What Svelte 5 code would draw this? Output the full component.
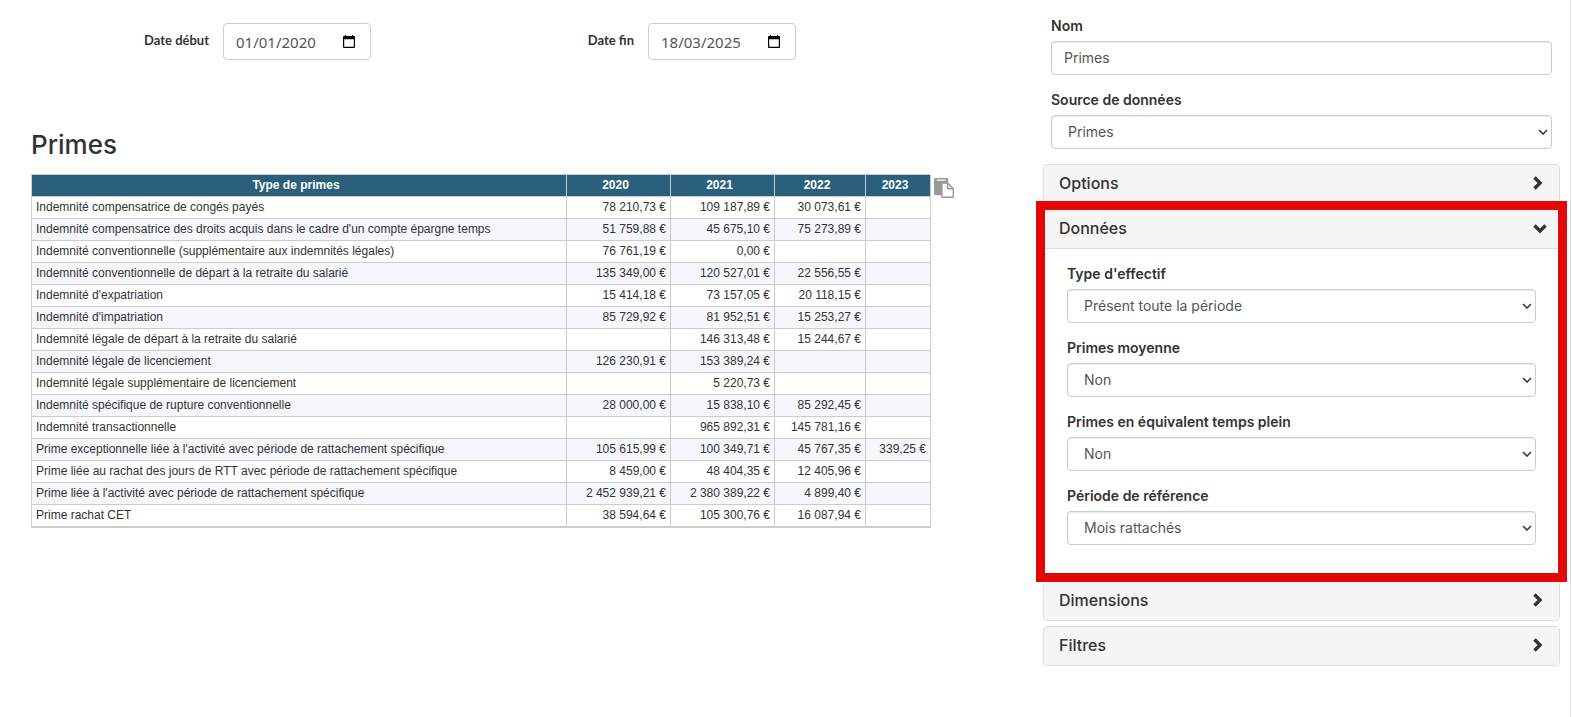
<script>
	let startDate = $state('01/01/2020');
	let endDate = $state('18/03/2025');
	let name = $state('Primes');
	let source = $state('Primes');
	let opened = $state('Données');

	const years = ['2020', '2021', '2022', '2023'];

	const rows = [
		['Indemnité compensatrice de congés payés', '78 210,73 €', '109 187,89 €', '30 073,61 €', ''],
		["Indemnité compensatrice des droits acquis dans le cadre d'un compte épargne temps", '51 759,88 €', '45 675,10 €', '75 273,89 €', ''],
		['Indemnité conventionnelle (supplémentaire aux indemnités légales)', '76 761,19 €', '0,00 €', '', ''],
		['Indemnité conventionnelle de départ à la retraite du salarié', '135 349,00 €', '120 527,01 €', '22 556,55 €', ''],
		["Indemnité d'expatriation", '15 414,18 €', '73 157,05 €', '20 118,15 €', ''],
		["Indemnité d'impatriation", '85 729,92 €', '81 952,51 €', '15 253,27 €', ''],
		['Indemnité légale de départ à la retraite du salarié', '', '146 313,48 €', '15 244,67 €', ''],
		['Indemnité légale de licenciement', '126 230,91 €', '153 389,24 €', '', ''],
		['Indemnité légale supplémentaire de licenciement', '', '5 220,73 €', '', ''],
		['Indemnité spécifique de rupture conventionnelle', '28 000,00 €', '15 838,10 €', '85 292,45 €', ''],
		['Indemnité transactionnelle', '', '965 892,31 €', '145 781,16 €', ''],
		["Prime exceptionnelle liée à l'activité avec période de rattachement spécifique", '105 615,99 €', '100 349,71 €', '45 767,35 €', '339,25 €'],
		['Prime liée au rachat des jours de RTT avec période de rattachement spécifique', '8 459,00 €', '48 404,35 €', '12 405,96 €', ''],
		["Prime liée à l'activité avec période de rattachement spécifique", '2 452 939,21 €', '2 380 389,22 €', '4 899,40 €', ''],
		['Prime rachat CET', '38 594,64 €', '105 300,76 €', '16 087,94 €', '']
	];

	const fields = [
		{ id: 'effectif', label: "Type d'effectif", value: 'Présent toute la période' },
		{ id: 'moyenne', label: 'Primes moyenne', value: 'Non' },
		{ id: 'etp', label: 'Primes en équivalent temps plein', value: 'Non' },
		{ id: 'periode', label: 'Période de référence', value: 'Mois rattachés' }
	];

	const panels = ['Options', 'Données', 'Dimensions', 'Filtres'];

	const toggle = (panel) => {
		opened = opened === panel ? '' : panel;
	};
</script>

{#snippet calendar()}
	<svg viewBox="0 0 14 14" width="14" height="14" aria-hidden="true">
		<path d="M2 1h1V0h1v1h6V0h1v1h1q1 0 1 1v10q0 1-1 1H2q-1 0-1-1V2q0-1 1-1zM2.200 4.200v7.600h9.600v-7.600z" fill="#000" fill-rule="evenodd" />
	</svg>
{/snippet}

{#snippet select(id, label, value)}
	<div class="form-group">
		<label for={id}>{label}</label>
		<div class="select-wrap">
			<select {id} class="form-control">
				<option>{value}</option>
			</select>
			<svg viewBox="0 0 10 6" width="10" height="6" aria-hidden="true">
				<path d="M1 1l4 4 4-4" fill="none" stroke="#444" stroke-width="1.700" />
			</svg>
		</div>
	</div>
{/snippet}

<div class="page">
	<main>
		<div class="dates">
			<div class="date-group">
				<label for="start">Date début</label>
				<div class="date-control">
					<input id="start" type="text" bind:value={startDate} />
					<button aria-label="Choisir la date de début">{@render calendar()}</button>
				</div>
			</div>
			<div class="date-group">
				<label for="end">Date fin</label>
				<div class="date-control">
					<input id="end" type="text" bind:value={endDate} />
					<button aria-label="Choisir la date de fin">{@render calendar()}</button>
				</div>
			</div>
		</div>

		<h2>Primes</h2>
		<div class="report">
			<table>
				<colgroup>
					<col />
					<col class="col-large" />
					<col class="col-large" />
					<col class="col-medium" />
					<col class="col-small" />
				</colgroup>
				<thead>
					<tr>
						<th>Type de primes</th>
						{#each years as year}
							<th>{year}</th>
						{/each}
					</tr>
				</thead>
				<tbody>
					{#each rows as row}
						<tr>
							{#each row as cell}
								<td>{cell}</td>
							{/each}
						</tr>
					{/each}
				</tbody>
			</table>
			<button class="copy" aria-label="Copier le tableau">
				<svg viewBox="0 0 1792 1792" width="20" height="20" aria-hidden="true">
					<path fill="#999" d="M768 1664h896v-640h-416q-40 0-68-28t-28-68v-416h-384v1152zm256-1440v-64q0-13-9.500-22.500t-22.500-9.500h-704q-13 0-22.500 9.500t-9.500 22.500v64q0 13 9.500 22.500t22.500 9.500h704q13 0 22.500-9.500t9.500-22.500zm256 672h299l-299-299v299zm512 128v672q0 40-28 68t-68 28h-960q-40 0-68-28t-28-68v-160h-544q-40 0-68-28t-28-68v-1344q0-40 28-68t68-28h1088q40 0 68 28t28 68v328q21 13 36 28l408 408q28 28 48 76t20 88z" />
				</svg>
			</button>
		</div>
	</main>

	<aside>
		<div class="general">
			<div class="form-group">
				<label for="name">Nom</label>
				<input id="name" class="form-control" type="text" bind:value={name} />
			</div>
			{@render select('source', 'Source de données', source)}
		</div>

		{#each panels as panel}
			<section class="panel" class:highlight={panel === 'Données'}>
				<button class="panel-heading" aria-expanded={opened === panel} onclick={() => toggle(panel)}>
					{panel}
					{#if opened === panel}
						<svg viewBox="0 0 14 14" width="14" height="14" aria-hidden="true">
							<path d="M1.500 4.500L7 10l5.500-5.500" fill="none" stroke="#333" stroke-width="3.400" />
						</svg>
					{:else}
						<svg viewBox="0 0 14 14" width="14" height="14" aria-hidden="true">
							<path d="M1.500 1.500L7 7l-5.500 5.500" fill="none" stroke="#333" stroke-width="3.400" />
						</svg>
					{/if}
				</button>
				{#if opened === panel && panel === 'Données'}
					<div class="panel-body">
						{#each fields as field}
							{@render select(field.id, field.label, field.value)}
						{/each}
					</div>
				{/if}
			</section>
		{/each}
	</aside>
</div>

<style>
	:global(body) {
		margin: 0;
		background: #fff;
	}

	.page {
		display: flex;
		min-height: 100vh;
		padding-right: 1px;
		box-sizing: border-box;
		font-family: Inter, sans-serif;
		font-size: 14px;
		line-height: 20px;
		color: #333;
	}

	.page * {
		box-sizing: border-box;
	}

	main {
		flex: 1;
		min-width: 0;
		padding: 23px 79px 0 31px;
	}

	aside {
		flex: 0 0 538px;
		padding: 16px 10px;
		border-right: 1px solid #ddd;
	}

	button {
		font: inherit;
		color: inherit;
		border: none;
		padding: 0;
		background: none;
		cursor: pointer;
	}

	svg {
		display: block;
	}

	/* date filters */
	.dates {
		display: grid;
		grid-template-columns: 1fr 1fr;
		padding-right: 73px;
	}

	.date-group {
		display: flex;
		gap: 14px;
	}

	.date-group label {
		width: 178px;
		padding-top: 7px;
		text-align: right;
		font-family: Lato, sans-serif;
		font-size: 13px;
		font-weight: bold;
	}

	.date-control {
		display: flex;
		align-items: center;
		width: 148px;
		height: 37px;
		padding: 0 14px 0 12px;
		border: 1px solid #ccc;
		border-radius: 4px;
	}

	.date-control input {
		flex: 1;
		min-width: 0;
		padding: 0;
		border: none;
		outline: none;
		background: none;
		font-family: 'Noto Sans', sans-serif;
		font-size: 15px;
		color: #555;
	}

	/* report */
	h2 {
		margin: 69px 0 13px;
		font-size: 26px;
		font-weight: 500;
		line-height: 32px;
	}

	.report {
		display: flex;
		align-items: flex-start;
		gap: 3px;
	}

	table {
		flex: 1;
		table-layout: fixed;
		border-collapse: collapse;
		border-bottom: 2px solid #ccc;
		font-family: 'Liberation Sans', Arial, sans-serif;
		font-size: 12px;
		line-height: 15px;
	}

	.col-large {
		width: 104px;
	}

	.col-medium {
		width: 91px;
	}

	.col-small {
		width: 65px;
	}

	th,
	td {
		height: 22px;
		padding: 3px 4px;
		border: 1px solid #ccc;
		text-align: right;
		white-space: nowrap;
	}

	th {
		padding-right: 10px;
		background: #2b607c;
		color: #fff;
		text-align: center;
	}

	td:first-child {
		text-align: left;
	}

	tbody tr:nth-child(even) {
		background: #f6f7fc;
	}

	.copy {
		padding-top: 4px;
	}

	/* settings */
	.general {
		padding: 0 8px;
	}

	.form-group {
		margin-bottom: 15px;
	}

	.form-group label {
		display: block;
		margin-bottom: 5px;
		font-weight: 600;
	}

	.form-control {
		display: block;
		width: 100%;
		height: 34px;
		padding: 5px 12px 7px;
		border: 1px solid #ccc;
		border-radius: 4px;
		background: #fff;
		box-shadow: inset 0 1px 1px rgba(0, 0, 0, 0.08);
		font: inherit;
		color: #555;
	}

	.select-wrap {
		position: relative;
	}

	.select-wrap select {
		appearance: none;
		padding: 0 24px 0 16px;
	}

	.select-wrap svg {
		position: absolute;
		top: 14px;
		right: 4px;
		pointer-events: none;
	}

	.panel {
		position: relative;
		margin-bottom: 5px;
		border: 1px solid #ddd;
		border-radius: 4px;
	}

	.panel-heading {
		display: flex;
		align-items: center;
		justify-content: space-between;
		width: 100%;
		height: 38px;
		padding: 0 12px 2px 15px;
		border-radius: 3px;
		background: #f5f5f5;
		font-size: 16px;
		font-weight: 500;
	}

	.panel-body {
		padding: 15px 23px;
		border-top: 1px solid #ddd;
	}

	/* frame drawn over the neighbouring panels */
	.highlight {
		z-index: 1;
	}

	.highlight::after {
		content: '';
		position: absolute;
		inset: -9px -8px -7px;
		border: 9px solid #e20808;
		pointer-events: none;
	}
</style>
